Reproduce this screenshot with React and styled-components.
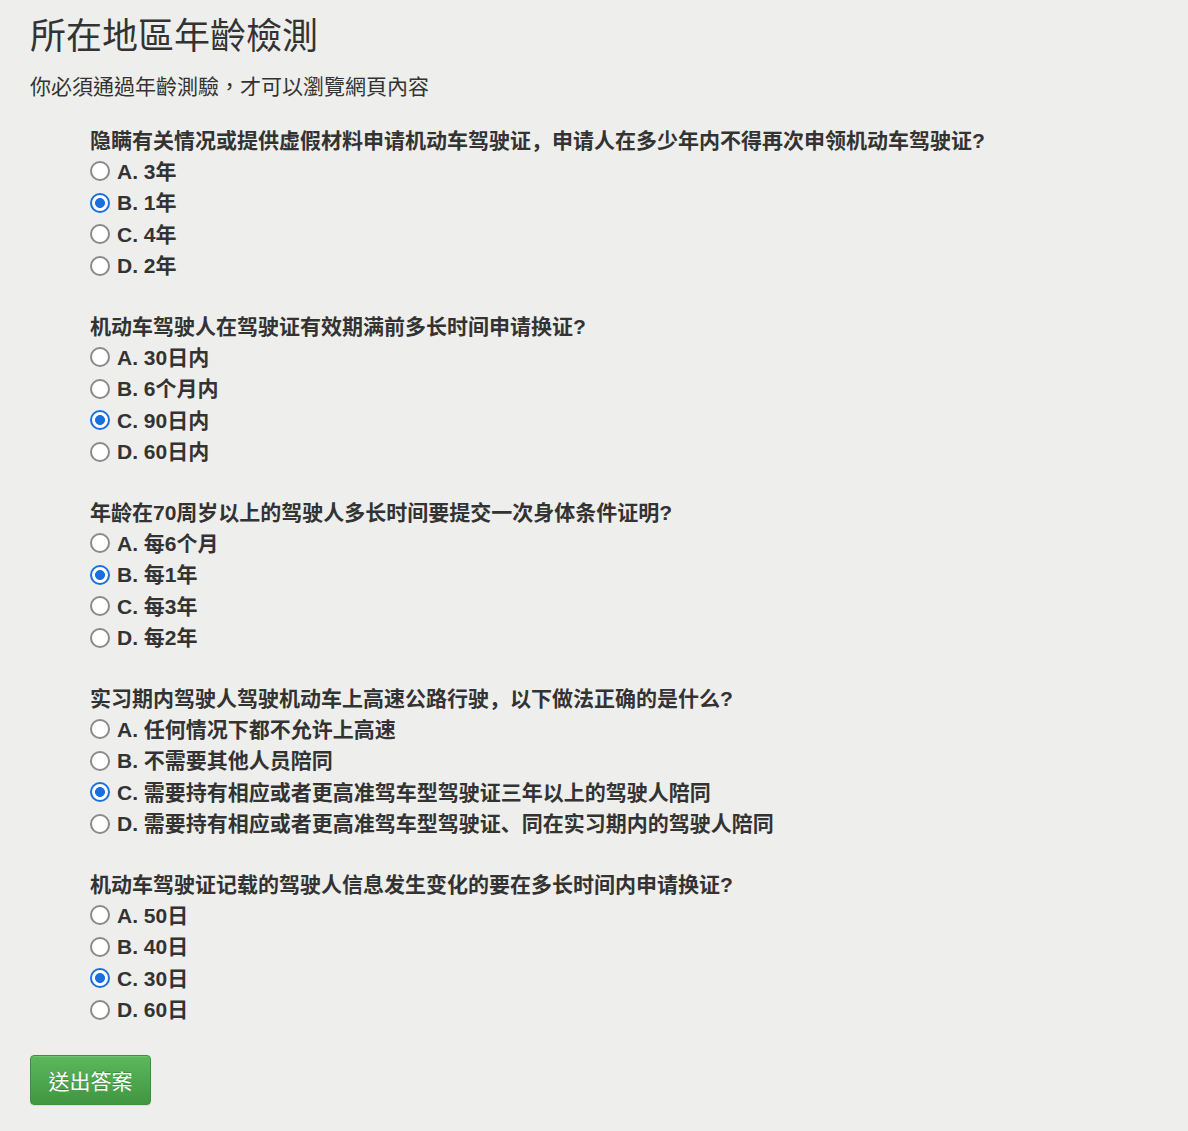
import styled, { createGlobalStyle } from "styled-components";
import { useState } from "react";

const GlobalStyle = createGlobalStyle`
  html, body {
    margin: 0;
    padding: 0;
    background: #eeeeec;
  }
  body {
    font-family: "Liberation Sans", "Noto Sans CJK SC", sans-serif;
    color: #333333;
  }
`;

const Pagina = styled.main`
  padding: 15px 30px 30px 30px;
`;

const Titulo = styled.h1`
  margin: 0 0 13px 0;
  font-family: "Liberation Sans", "Noto Sans CJK TC", sans-serif;
  font-size: 36px;
  font-weight: 400;
  line-height: 44px;
  color: #333333;
`;

const Subtitulo = styled.p`
  margin: 0 0 24px 0;
  font-family: "Liberation Sans", "Noto Sans CJK TC", sans-serif;
  font-size: 21px;
  line-height: 30px;
  color: #333333;
`;

const Formulario = styled.form`
  display: flex;
  flex-direction: column;
`;

const Bloco = styled.fieldset`
  margin: 0 0 32px 60px;
  padding: 0;
  border: none;
`;

const Pergunta = styled.legend`
  padding: 0;
  font-size: 21px;
  font-weight: 700;
  line-height: 30px;
  height: 28px;
`;

const Opcao = styled.label`
  display: flex;
  align-items: center;
  height: 31.5px;
  font-size: 21px;
  font-weight: 700;
  cursor: pointer;
`;

const Radio = styled.input`
  appearance: none;
  box-sizing: border-box;
  flex: none;
  width: 20px;
  height: 20px;
  margin: 3px 7px 0 0;
  border: 2.3px solid #8a8a8a;
  border-radius: 50%;
  background: #ffffff;
  cursor: pointer;

  &:checked {
    border-color: #1a6fe0;
    background: radial-gradient(circle, #1a6fe0 0 4.6px, #ffffff 5.3px);
  }
`;

const BotaoEnviar = styled.button`
  align-self: flex-start;
  margin-top: -1px;
  height: 50px;
  width: 121px;
  padding: 0;
  font-family: "Liberation Sans", "Noto Sans CJK TC", sans-serif;
  font-size: 21px;
  color: #ffffff;
  background: linear-gradient(to bottom, #5cb85c 0%, #419641 100%);
  border: 1px solid #3e8f3e;
  border-radius: 4px;
  box-shadow: inset 0 1px 0 rgba(255, 255, 255, 0.15), 0 1px 1px rgba(0, 0, 0, 0.075);
  text-shadow: 0 -1px 0 rgba(0, 0, 0, 0.2);
  cursor: pointer;
`;

const perguntas = [
  {
    id: "q1",
    texto: "隐瞒有关情况或提供虚假材料申请机动车驾驶证，申请人在多少年内不得再次申领机动车驾驶证?",
    opcoes: ["A. 3年", "B. 1年", "C. 4年", "D. 2年"],
    marcada: 1,
  },
  {
    id: "q2",
    texto: "机动车驾驶人在驾驶证有效期满前多长时间申请换证?",
    opcoes: ["A. 30日内", "B. 6个月内", "C. 90日内", "D. 60日内"],
    marcada: 2,
  },
  {
    id: "q3",
    texto: "年龄在70周岁以上的驾驶人多长时间要提交一次身体条件证明?",
    opcoes: ["A. 每6个月", "B. 每1年", "C. 每3年", "D. 每2年"],
    marcada: 1,
  },
  {
    id: "q4",
    texto: "实习期内驾驶人驾驶机动车上高速公路行驶，以下做法正确的是什么?",
    opcoes: [
      "A. 任何情况下都不允许上高速",
      "B. 不需要其他人员陪同",
      "C. 需要持有相应或者更高准驾车型驾驶证三年以上的驾驶人陪同",
      "D. 需要持有相应或者更高准驾车型驾驶证、同在实习期内的驾驶人陪同",
    ],
    marcada: 2,
  },
  {
    id: "q5",
    texto: "机动车驾驶证记载的驾驶人信息发生变化的要在多长时间内申请换证?",
    opcoes: ["A. 50日", "B. 40日", "C. 30日", "D. 60日"],
    marcada: 2,
  },
];

const App = () => {
  const [respostas, setRespostas] = useState(
    Object.fromEntries(perguntas.map((p) => [p.id, p.marcada]))
  );

  return (
    <>
      <GlobalStyle />
      <Pagina>
        <Titulo>所在地區年齡檢測</Titulo>
        <Subtitulo>你必須通過年齡測驗，才可以瀏覽網頁內容</Subtitulo>
        <Formulario onSubmit={(e) => e.preventDefault()}>
          {perguntas.map((p) => (
            <Bloco key={p.id}>
              <Pergunta>{p.texto}</Pergunta>
              {p.opcoes.map((op, i) => (
                <Opcao key={op}>
                  <Radio
                    type="radio"
                    name={p.id}
                    checked={respostas[p.id] === i}
                    onChange={() => setRespostas({ ...respostas, [p.id]: i })}
                  />
                  {op}
                </Opcao>
              ))}
            </Bloco>
          ))}
          <BotaoEnviar type="submit">送出答案</BotaoEnviar>
        </Formulario>
      </Pagina>
    </>
  );
};

export default App;
